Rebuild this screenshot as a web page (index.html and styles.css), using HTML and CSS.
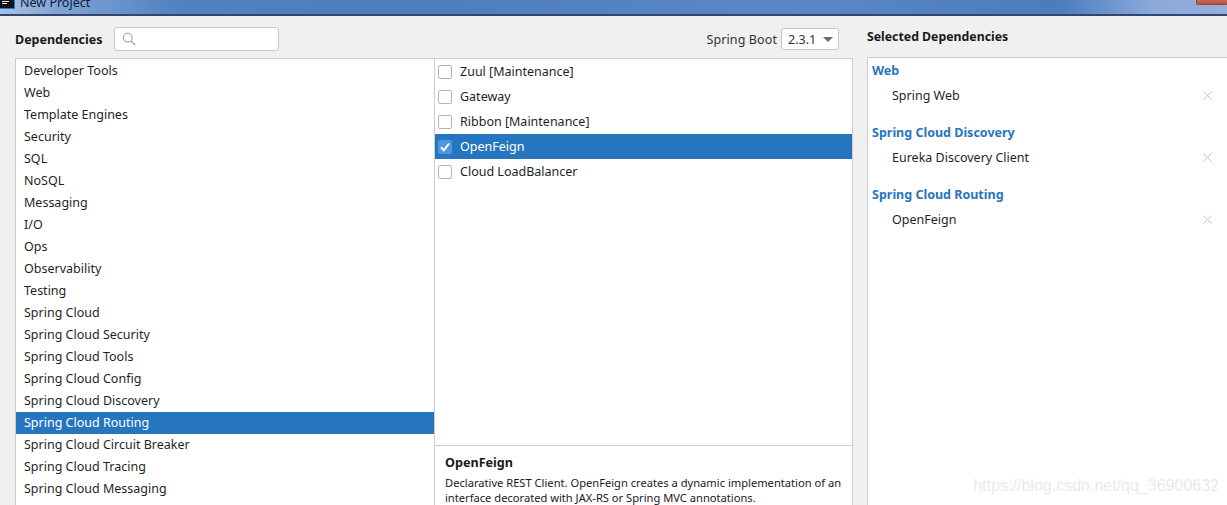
FILE: index.html
```html
<!DOCTYPE html>
<html lang="en">
<head>
<meta charset="utf-8">
<title>New Project</title>
<link rel="stylesheet" href="styles.css">
</head>
<body>
<div class="titlebar">
  <div class="app-icon"><i class="icon-bar"></i><i class="icon-bar short"></i></div>
  <div class="title-text">New Project</div>
  <div class="close-btn"></div>
</div>
<div class="content">
  <div class="main-col">
    <div class="toolbar">
      <div class="dep-label">Dependencies</div>
      <div class="search">
        <svg class="search-icon" width="14" height="14" viewBox="0 0 14 14"><circle cx="5.7" cy="5.7" r="4.4" fill="none" stroke="#a3a3a3" stroke-width="1.1"/><path d="M9 9l4 4" stroke="#a3a3a3" stroke-width="1.3" fill="none"/></svg>
      </div>
      <div class="boot-label">Spring Boot</div>
      <div class="boot-select"><span>2.3.1</span><i class="caret"></i></div>
    </div>
    <div class="panels">
      <ul class="categories">
        <li>Developer Tools</li>
        <li>Web</li>
        <li>Template Engines</li>
        <li>Security</li>
        <li>SQL</li>
        <li>NoSQL</li>
        <li>Messaging</li>
        <li>I/O</li>
        <li>Ops</li>
        <li>Observability</li>
        <li>Testing</li>
        <li>Spring Cloud</li>
        <li>Spring Cloud Security</li>
        <li>Spring Cloud Tools</li>
        <li>Spring Cloud Config</li>
        <li>Spring Cloud Discovery</li>
        <li class="active">Spring Cloud Routing</li>
        <li>Spring Cloud Circuit Breaker</li>
        <li>Spring Cloud Tracing</li>
        <li>Spring Cloud Messaging</li>
      </ul>
      <div class="deps">
        <ul class="dep-list">
          <li><span class="check"></span>Zuul [Maintenance]</li>
          <li><span class="check"></span>Gateway</li>
          <li><span class="check"></span>Ribbon [Maintenance]</li>
          <li class="active"><span class="check on"><svg width="14" height="14" viewBox="0 0 14 14"><path d="M3 7.3l2.800 3L11 3.600" fill="none" stroke="#fff" stroke-width="2"/></svg></span>OpenFeign</li>
          <li><span class="check"></span>Cloud LoadBalancer</li>
        </ul>
        <div class="desc">
          <div class="desc-title">OpenFeign</div>
          <p>Declarative REST Client. OpenFeign creates a dynamic implementation of an interface decorated with JAX-RS or Spring MVC annotations.</p>
        </div>
      </div>
    </div>
  </div>
  <div class="side-col">
    <div class="side-title">Selected Dependencies</div>
    <div class="selected">
      <div class="group">Web</div>
      <div class="sel-item"><span>Spring Web</span><svg class="x" width="9" height="9" viewBox="0 0 9 9"><path d="M.5.5l8 8M8.500.5l-8 8" stroke="#c4c4c4" fill="none"/></svg></div>
      <div class="group">Spring Cloud Discovery</div>
      <div class="sel-item"><span>Eureka Discovery Client</span><svg class="x" width="9" height="9" viewBox="0 0 9 9"><path d="M.5.5l8 8M8.500.5l-8 8" stroke="#c4c4c4" fill="none"/></svg></div>
      <div class="group">Spring Cloud Routing</div>
      <div class="sel-item"><span>OpenFeign</span><svg class="x" width="9" height="9" viewBox="0 0 9 9"><path d="M.5.5l8 8M8.500.5l-8 8" stroke="#c4c4c4" fill="none"/></svg></div>
    </div>
  </div>
</div>
<div class="watermark">https://blog.csdn.net/qq_36900632</div>
</body>
</html>
```
FILE: styles.css
```css
* { box-sizing: border-box; }
html, body { margin: 0; padding: 0; height: 505px; overflow: hidden; }
body {
  width: 1227px;
  background: #f0f0f0;
  font-family: "Noto Sans", "Open Sans", sans-serif;
  font-size: 12.500px;
  color: #1a1a1a;
  display: flex;
  flex-direction: column;
  position: relative;
}
ul { list-style: none; margin: 0; padding: 0; }
.titlebar {
  height: 16px;
  flex: none;
  display: flex;
  align-items: flex-end;
  overflow: hidden;
  padding-bottom: 1px;
  border-bottom: 2px solid #33476e;
  background: linear-gradient(90deg, #a9c2e4 0, #7fa3d5 60px, #5181c0 180px, #4d7dbd 400px, #5c87c6 800px, #4b7cbc 1060px, #8aa9da 1150px, #93afdd 1227px);
}
.app-icon {
  width: 15px; height: 9px; flex: none; align-self: flex-start; background: #111;
  border-right: 1px solid #1e78e6; border-bottom: 1px solid #1e78e6;
  display: flex; flex-direction: column; gap: 1px; padding: 1px 0 0 2px;
}
.icon-bar { display: block; width: 7px; height: 1px; background: #eee; }
.icon-bar.short { width: 5px; }
.title-text { margin-left: 5px; color: #10203a; font-size: 12.500px; line-height: 18px; height: 18px; flex: none; margin-bottom: 1px; }
.close-btn { margin-left: auto; width: 31px; height: 5px; background: linear-gradient(180deg, #d0694e, #b9503f); border: 1px solid #8c4a44; border-top: 0; border-right: 0; border-bottom-left-radius: 2px; align-self: flex-start; flex: none; }
.content { flex: 1; display: flex; min-height: 0; }
.main-col { width: 853px; flex: none; display: flex; flex-direction: column; padding-left: 15px; }
.toolbar { height: 42px; flex: none; display: flex; align-items: center; padding-top: 4px; }
.dep-label { font-weight: 700; width: 99px; flex: none; }
.search {
  width: 165px; height: 24px; background: #fff; border: 1px solid #c8c8c8; border-radius: 3px;
  display: flex; align-items: center; padding-left: 7px; flex: none;
}
.boot-label { margin-left: auto; margin-right: 4px; color: #333; letter-spacing: .1px; }
.boot-select {
  width: 58px; height: 22px; background: #fff; border: 1px solid #c8c8c8; border-radius: 3px;
  display: flex; align-items: center; justify-content: space-between; padding: 0 5px 0 6px; margin-right: 14px; color: #333;
}
.caret { width: 0; height: 0; border-left: 5px solid transparent; border-right: 5px solid transparent; border-top: 5px solid #6b6b6b; }
.panels { flex: 1; display: flex; min-height: 0; }
.categories {
  width: 419px; flex: none; background: #fff; border: 1px solid #cdcdcd; border-bottom: 0; border-right: 0; padding-top: 1px; overflow: hidden;
}
.categories li { height: 22px; line-height: 22px; padding-left: 8px; color: #1f1f1f; }
.categories li.active { background: #2675bf; color: #fff; }
.deps {
  flex: 1; min-width: 0; background: #fff; border: 1px solid #cdcdcd; border-bottom: 0; display: flex; flex-direction: column;
}
.dep-list { flex: 1; }
.dep-list li { height: 25px; display: flex; align-items: center; color: #1f1f1f; }
.dep-list li.active { background: #2675bf; color: #fff; }
.check {
  width: 14px; height: 14px; margin: 0 8px 0 3px; flex: none; background: #fff; border: 1px solid #b5b5b5; border-radius: 2px; display: block;
}
.check.on { background: #4d97e0; border: 0; }
.check svg { display: block; }
.desc { height: 60px; flex: none; border-top: 1px solid #cdcdcd; padding: 7px 5px 0 10px; overflow: hidden; }
.desc-title { font-weight: 700; font-size: 12.600px; line-height: 20px; }
.desc p { margin: 2px 0 0; font-size: 11.150px; line-height: 15px; }
.side-col { flex: 1; min-width: 0; display: flex; flex-direction: column; padding-left: 14px; }
.side-title { height: 41px; flex: none; font-weight: 700; font-size: 12.300px; line-height: 42px; }
.selected { flex: 1; background: #fff; border: 1px solid #cdcdcd; border-right: 0; border-bottom: 0; padding: 2px 0 0 4px; }
.group { height: 22px; line-height: 22px; font-weight: 700; color: #2675bf; }
.group ~ .group { margin-top: 14px; }
.sel-item { height: 26px; display: flex; align-items: center; justify-content: space-between; padding: 0 15px 0 20px; color: #1f1f1f; }
.watermark {
  position: absolute; right: 8px; top: 477px; font-family: "Liberation Sans", sans-serif; font-size: 16px; color: #eaeaea; white-space: nowrap;
}
```
